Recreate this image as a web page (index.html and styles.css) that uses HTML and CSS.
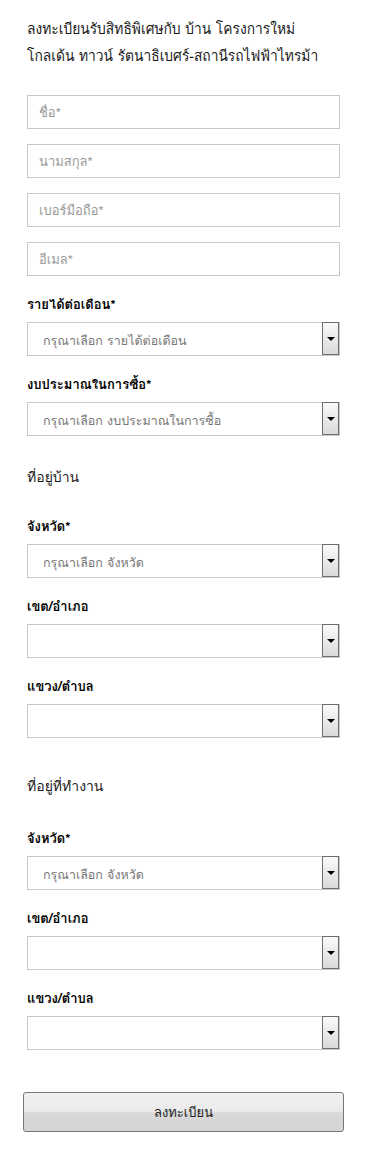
FILE: index.html
```html
<!DOCTYPE html>
<html lang="th">
<head>
<meta charset="utf-8">
<title>ลงทะเบียน</title>
<link rel="stylesheet" href="styles.css">
</head>
<body>
<div class="page">
  <h1 class="title">ลงทะเบียนรับสิทธิพิเศษกับ บ้าน โครงการใหม่<br>โกลเด้น ทาวน์ รัตนาธิเบศร์-สถานีรถไฟฟ้าไทรม้า</h1>

  <div class="inputs">
    <div class="input">ชื่อ*</div>
    <div class="input">นามสกุล*</div>
    <div class="input">เบอร์มือถือ*</div>
    <div class="input">อีเมล*</div>
  </div>

  <div class="field">
    <div class="label">รายได้ต่อเดือน*</div>
    <div class="select"><span class="value">กรุณาเลือก รายได้ต่อเดือน</span><span class="arrow"></span></div>
  </div>
  <div class="field">
    <div class="label">งบประมาณในการซื้อ*</div>
    <div class="select"><span class="value">กรุณาเลือก งบประมาณในการซื้อ</span><span class="arrow"></span></div>
  </div>

  <h2 class="section">ที่อยู่บ้าน</h2>
  <div class="field">
    <div class="label">จังหวัด*</div>
    <div class="select"><span class="value">กรุณาเลือก จังหวัด</span><span class="arrow"></span></div>
  </div>
  <div class="field">
    <div class="label">เขต/อำเภอ</div>
    <div class="select"><span class="value"></span><span class="arrow"></span></div>
  </div>
  <div class="field">
    <div class="label">แขวง/ตำบล</div>
    <div class="select"><span class="value"></span><span class="arrow"></span></div>
  </div>

  <h2 class="section section-work">ที่อยู่ที่ทำงาน</h2>
  <div class="field">
    <div class="label">จังหวัด*</div>
    <div class="select"><span class="value">กรุณาเลือก จังหวัด</span><span class="arrow"></span></div>
  </div>
  <div class="field">
    <div class="label">เขต/อำเภอ</div>
    <div class="select"><span class="value"></span><span class="arrow"></span></div>
  </div>
  <div class="field">
    <div class="label">แขวง/ตำบล</div>
    <div class="select"><span class="value"></span><span class="arrow"></span></div>
  </div>

  <button class="submit" type="button">ลงทะเบียน</button>
</div>
</body>
</html>
```
FILE: styles.css
```css
html, body {
  margin: 0;
  padding: 0;
  background: #fff;
}
body {
  font-family: Tahoma, "Loma", "Garuda", "Noto Sans Thai", "Noto Sans", "DejaVu Sans", sans-serif;
  color: #111;
}
.page {
  width: 313px;
  padding: 16px 0 0 27px;
}
.title {
  margin: 0;
  font-size: 15px;
  font-weight: normal;
  line-height: 27px;
  color: #1a1a1a;
  white-space: nowrap;
  transform: scaleX(0.92);
  transform-origin: left center;
}
.inputs {
  display: flex;
  flex-direction: column;
  gap: 15px;
  margin-top: 25px;
}
.input {
  box-sizing: border-box;
  height: 34px;
  border: 1px solid #c8c8c8;
  padding: 0 11px;
  display: flex;
  align-items: center;
  font-size: 13px;
  color: #9a9a9a;
}
.field {
  margin-top: 20px;
}
.label {
  font-size: 13px;
  font-weight: bold;
  color: #000;
  line-height: 18px;
  margin-bottom: 8px;
}
.select {
  box-sizing: border-box;
  height: 34px;
  border: 1px solid #c8c8c8;
  display: flex;
  align-items: stretch;
}
.value {
  flex: 1;
  display: flex;
  align-items: center;
  padding: 4px 0 0 15px;
  font-size: 12.5px;
  color: #777;
}
.arrow {
  box-sizing: border-box;
  width: 17px;
  margin: -1px 0 0 0;
  height: 33px;
  border: 1px solid #6e6e6e;
  background: linear-gradient(#fafafa, #dadada);
  display: flex;
  align-items: center;
  justify-content: center;
}
.arrow::before {
  content: "";
  width: 0;
  height: 0;
  border-left: 4px solid transparent;
  border-right: 4px solid transparent;
  border-top: 4px solid #000;
}
.section {
  margin: 30px 0 0;
  font-size: 14px;
  font-weight: normal;
  line-height: 22px;
  color: #1a1a1a;
}
.section-work {
  margin-top: 37px;
}
.section + .field {
  margin-top: 30px;
}
.section-work + .field {
  margin-top: 33px;
}
.submit {
  display: block;
  box-sizing: border-box;
  margin: 42px 0 0 -4px;
  width: 321px;
  height: 40px;
  border: 1px solid #777;
  border-radius: 3px;
  background: linear-gradient(#f0f0f0 0%, #ebebeb 48%, #d8d8d8 52%, #d6d6d6 100%);
  font-family: inherit;
  font-size: 13px;
  color: #222;
  cursor: pointer;
}
```
